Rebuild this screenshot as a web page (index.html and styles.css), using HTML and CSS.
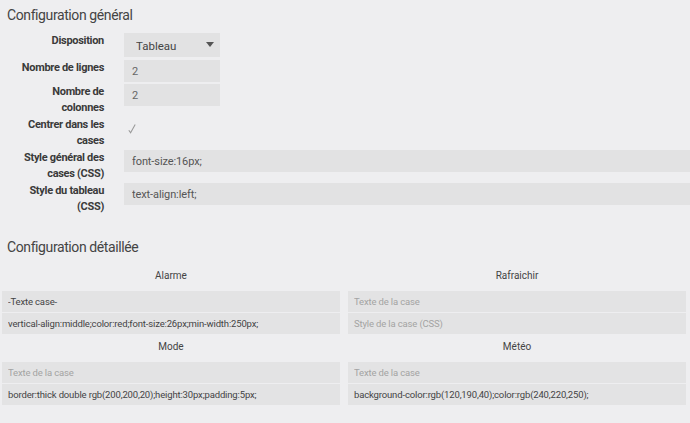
FILE: index.html
```html
<!DOCTYPE html>
<html lang="fr">
  <head>
    <meta charset="UTF-8" />
    <meta name="viewport" content="width=device-width, initial-scale=1.0" />
    <title>Configuration</title>
    <link rel="stylesheet" href="styles.css">
  </head>
  <body>
    <h3 class="section-title">Configuration général</h3>
    <form class="general">
      <div class="row row-select">
        <label for="disposition">Disposition</label>
        <div class="select-wrap">
          <select id="disposition">
            <option selected>Tableau</option>
            <option>Liste</option>
          </select>
        </div>
      </div>
      <div class="row row-short">
        <label for="lignes">Nombre de lignes</label>
        <input type="text" id="lignes" class="small" value="2" />
      </div>
      <div class="row">
        <label for="colonnes">Nombre de colonnes</label>
        <input type="text" id="colonnes" class="small" value="2" />
      </div>
      <div class="row">
        <label for="centrer">Centrer dans les cases</label>
        <span class="check" id="centrer">
          <svg width="8" height="10" viewBox="0 0 8 10">
            <path d="M0.8 6.2 L2.6 8.8 L7.2 0.6" fill="none" stroke="#9a9a9a" stroke-width="1.1" />
          </svg>
        </span>
      </div>
      <div class="row">
        <label for="style-cases">Style général des cases (CSS)</label>
        <input type="text" id="style-cases" class="wide" value="font-size:16px;" />
      </div>
      <div class="row">
        <label for="style-tableau">Style du tableau (CSS)</label>
        <input type="text" id="style-tableau" class="wide" value="text-align:left;" />
      </div>
    </form>

    <h3 class="section-title detail-title">Configuration détaillée</h3>
    <div class="detail-grid">
      <div class="cell">
        <div class="cell-title">Alarme</div>
        <input type="text" value="-Texte case-" placeholder="Texte de la case" />
        <input type="text" value="vertical-align:middle;color:red;font-size:26px;min-width:250px;" placeholder="Style de la case (CSS)" />
      </div>
      <div class="cell">
        <div class="cell-title">Rafraichir</div>
        <input type="text" placeholder="Texte de la case" />
        <input type="text" placeholder="Style de la case (CSS)" />
      </div>
      <div class="cell">
        <div class="cell-title">Mode</div>
        <input type="text" placeholder="Texte de la case" />
        <input type="text" value="border:thick double rgb(200,200,20);height:30px;padding:5px;" placeholder="Style de la case (CSS)" />
      </div>
      <div class="cell">
        <div class="cell-title">Météo</div>
        <input type="text" placeholder="Texte de la case" />
        <input type="text" value="background-color:rgb(120,190,40);color:rgb(240,220,250);" placeholder="Style de la case (CSS)" />
      </div>
    </div>
  </body>
</html>
```

FILE: styles.css
```css
body {
  font-family: Roboto, "Liberation Sans", sans-serif;
  margin: 0;
  background-color: #eeeef0;
  color: #333;
  overflow: hidden;
}
.section-title {
  margin: 0;
  padding: 5px 7px 0;
  font-size: 14px;
  font-weight: 400;
  line-height: 20px;
  letter-spacing: -0.4px;
  color: #444;
}
.detail-title {
  margin-top: 22px;
  padding-top: 0;
}

/* formulaire general */
.general {
  margin-top: 8px;
}
.row {
  display: flex;
  align-items: flex-start;
  margin-bottom: 1px;
}
.row-select {
  margin-bottom: 3px;
}
.row-short {
  margin-bottom: 2px;
}
.row label {
  width: 84px;
  flex: none;
  margin: 0 20px 0 20px;
  text-align: right;
  font-size: 11px;
  font-weight: 700;
  line-height: 16px;
  letter-spacing: -0.3px;
  color: #3a3a3a;
}
.row input,
.select-wrap select {
  border: none;
  border-radius: 0;
  background-color: #e2e2e3;
  font-family: inherit;
  color: #555;
  outline: none;
  box-sizing: border-box;
}
.row input {
  height: 22px;
  padding: 0 8px;
  font-size: 11px;
  letter-spacing: -0.1px;
}
.row input.small {
  width: 96px;
  color: #666;
}
.row input.wide {
  flex: 1;
  min-width: 0;
}
.select-wrap {
  position: relative;
  width: 96px;
}
.select-wrap select {
  appearance: none;
  -webkit-appearance: none;
  width: 100%;
  height: 24px;
  padding: 2px 12px 0;
  font-size: 11.5px;
  color: #444;
}
.select-wrap::after {
  content: "";
  position: absolute;
  right: 6px;
  top: 9px;
  border-left: 4px solid transparent;
  border-right: 4px solid transparent;
  border-top: 5px solid #555;
  pointer-events: none;
}
.check {
  display: block;
  margin: 2px 0 0 4px;
  height: 16px;
}

/* configuration detaillee */
.detail-grid {
  display: grid;
  grid-template-columns: 338px 338px;
  column-gap: 8px;
  padding-left: 2px;
  margin-top: 7px;
}
.cell-title {
  padding: 4px 0 7px;
  text-align: center;
  font-size: 10px;
  line-height: 16px;
  color: #444;
}
.cell input {
  display: block;
  width: 100%;
  height: 21px;
  margin-bottom: 1px;
  padding: 0 6px;
  box-sizing: border-box;
  border: none;
  background-color: #e3e3e4;
  font-family: inherit;
  font-size: 9.5px;
  letter-spacing: -0.15px;
  color: #444;
  outline: none;
}
.cell input::placeholder {
  color: #a3a3a3;
}
```
